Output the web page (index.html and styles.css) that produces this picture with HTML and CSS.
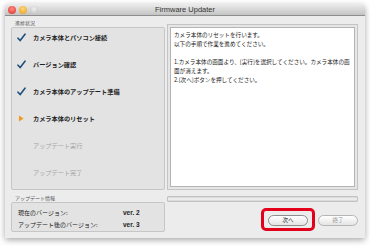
FILE: index.html
```html
<!DOCTYPE html>
<html lang="ja">
<head>
  <meta charset="UTF-8">
  <title>Firmware Updater</title>
  <link rel="stylesheet" href="styles.css">
</head>
<body>

  <div class="window">
    <!-- Title bar -->
    <div class="titlebar">
      <div class="lights">
        <span class="light red"></span>
        <span class="light yellow"></span>
        <span class="light grey"></span>
      </div>
      <div class="title">Firmware Updater</div>
    </div>

    <div class="content">
      <div class="top">
        <div class="left">
          <div class="label">進捗状況</div>
          <div class="panel steps">
            <div class="step done">
              <svg class="mark" width="9" height="9" viewBox="0 0 9 9"><path d="M1 5.2 L3.2 7.6 L8 1.2" fill="none" stroke="#1f4f7d" stroke-width="1.6" stroke-linecap="round"/></svg>
              <span>カメラ本体とパソコン接続</span>
            </div>
            <div class="step done">
              <svg class="mark" width="9" height="9" viewBox="0 0 9 9"><path d="M1 5.2 L3.2 7.6 L8 1.2" fill="none" stroke="#1f4f7d" stroke-width="1.6" stroke-linecap="round"/></svg>
              <span>バージョン確認</span>
            </div>
            <div class="step done">
              <svg class="mark" width="9" height="9" viewBox="0 0 9 9"><path d="M1 5.2 L3.2 7.6 L8 1.2" fill="none" stroke="#1f4f7d" stroke-width="1.6" stroke-linecap="round"/></svg>
              <span>カメラ本体のアップデート準備</span>
            </div>
            <div class="step current">
              <svg class="mark" width="9" height="9" viewBox="0 0 9 9"><path d="M2 1.5 L6.5 4.5 L2 7.5 Z" fill="#f09a1c"/></svg>
              <span>カメラ本体のリセット</span>
            </div>
            <div class="step todo">
              <span class="mark"></span>
              <span>アップデート実行</span>
            </div>
            <div class="step todo">
              <span class="mark"></span>
              <span>アップデート完了</span>
            </div>
          </div>
        </div>

        <div class="right">
          <div class="message-box">
            <div class="message">
              <p>カメラ本体のリセットを行います。<br>以下の手順で作業を進めてください。</p>
              <p>1.カメラ本体の画面より、[実行]を選択してください。カメラ本体の画面が消えます。<br>2.[次へ]ボタンを押してください。</p>
            </div>
          </div>
        </div>
      </div>

      <div class="bottom">
        <div class="left">
          <div class="label">アップデート情報</div>
          <div class="panel info">
            <div class="info-row"><span>現在のバージョン:</span><span class="ver">ver. 2</span></div>
            <div class="info-row"><span>アップデート後のバージョン:</span><span class="ver">ver. 3</span></div>
          </div>
        </div>

        <div class="right">
          <div class="progress"></div>
          <div class="buttons">
            <button class="btn next">次へ<span class="highlight"></span></button>
            <button class="btn disabled">終了</button>
          </div>
        </div>
      </div>
    </div>
  </div>

</body>
</html>
```

FILE: styles.css
```css
* {
  margin: 0;
  padding: 0;
  box-sizing: border-box;
}

body {
  background: #fff;
  width: 370px;
  height: 246px;
  overflow: hidden;
  font-family: "Noto Sans CJK JP", "Liberation Sans", sans-serif;
}

.window {
  margin: 4px 0 0 5px;
  width: 360px;
  height: 234px;
  background: #ececec;
  border-radius: 4px 4px 0 0;
  box-shadow: 0 2px 6px rgba(0, 0, 0, 0.35);
  display: flex;
  flex-direction: column;
}

/* Title bar */
.titlebar {
  position: relative;
  height: 12px;
  background: linear-gradient(to bottom, #ececec, #c4c4c4);
  border-bottom: 1px solid #8e8e8e;
  border-radius: 4px 4px 0 0;
  display: flex;
  align-items: center;
}

.lights {
  display: flex;
  gap: 3px;
  padding-left: 3px;
}

.light {
  width: 8px;
  height: 8px;
  border-radius: 50%;
}

.red { background: radial-gradient(circle at 50% 35%, #ff8c80, #d8302a); }
.yellow { background: radial-gradient(circle at 50% 35%, #ffd87a, #e99a1a); }
.grey { background: radial-gradient(circle at 50% 35%, #f0f0f0, #bdbdbd); }

.title {
  position: absolute;
  left: 0;
  right: 0;
  text-align: center;
  font-family: "Liberation Sans", sans-serif;
  font-size: 7.5px;
  color: #333;
}

.content {
  flex: 1;
  padding: 2px 7px 0 6px;
}

.top, .bottom {
  display: grid;
  grid-template-columns: 154px 1fr;
  column-gap: 2px;
}

.label {
  font-size: 5px;
  color: #555;
  height: 9px;
  line-height: 9px;
  padding-left: 4px;
}

.panel {
  background: #e3e3e3;
  border: 1px solid #c6c6c6;
  border-radius: 2px;
}

/* Steps */
.steps {
  height: 163px;
  padding: 5px 0 0 5px;
  display: flex;
  flex-direction: column;
  gap: 18px;
}

.step {
  height: 9px;
  display: flex;
  align-items: center;
  gap: 7px;
  font-size: 6.2px;
  font-weight: bold;
  color: #222;
}

.mark {
  width: 9px;
  height: 9px;
  flex-shrink: 0;
}

.step.todo {
  color: #a3a3a3;
  font-weight: normal;
}

/* Message */
.right {
  padding-top: 6px;
}

.top .right {
  display: flex;
}

.message-box {
  flex: 1;
  border: 1px solid #c4c4c4;
  padding: 2px;
  background: #e6e6e6;
}

.message {
  height: 100%;
  background: #fff;
  border: 1px solid #b4b4b4;
  padding: 3px 3px;
  font-size: 5.6px;
  line-height: 9px;
  color: #222;
}

.message p + p {
  margin-top: 9px;
}

/* Bottom */
.bottom {
  margin-top: 3px;
}

.info {
  height: 30px;
  padding: 3px 0 0 6px;
  font-size: 6px;
  color: #222;
}

.info-row {
  display: flex;
  height: 12px;
  align-items: center;
}

.info-row span:first-child {
  width: 105px;
}

.ver {
  font-family: "Liberation Sans", sans-serif;
  font-size: 6.5px;
  font-weight: bold;
}

.bottom .right {
  padding-top: 3px;
}

.progress {
  height: 6px;
  background: linear-gradient(to bottom, #d2d2d2, #f4f4f4 50%, #d2d2d2);
  border: 1px solid #c2c2c2;
  border-radius: 1px;
}

.buttons {
  display: flex;
  justify-content: flex-end;
  gap: 10px;
  margin-top: 13px;
}

.btn {
  position: relative;
  width: 40px;
  height: 11px;
  border-radius: 6px;
  border: 1px solid #8c8c8c;
  background: linear-gradient(to bottom, #ffffff, #e4e4e4);
  font-family: "Noto Sans CJK JP", sans-serif;
  font-size: 5.5px;
  color: #222;
  line-height: 9px;
}

.btn.disabled {
  color: #9a9a9a;
  border-color: #b5b5b5;
}

.highlight {
  position: absolute;
  left: -8px;
  top: -8px;
  width: 54px;
  height: 23px;
  border: 3px solid #e3001b;
  border-radius: 5px;
}
```
